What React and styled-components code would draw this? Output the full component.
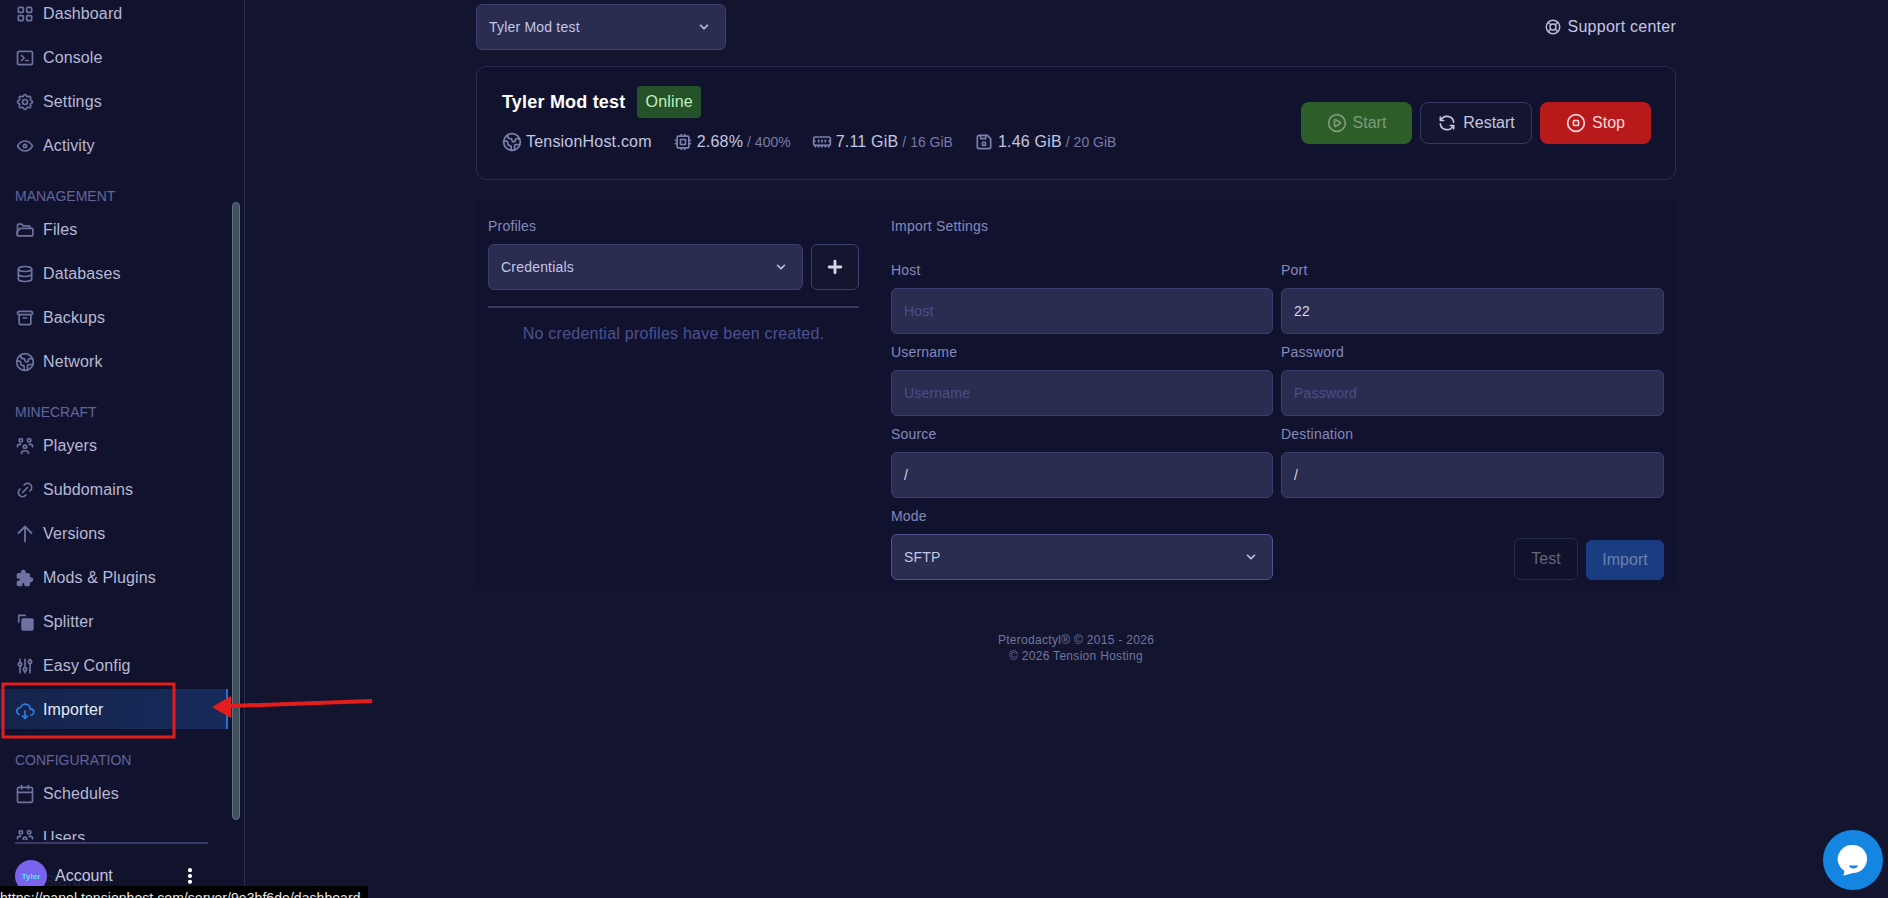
import React from 'react'
import styled, { createGlobalStyle } from 'styled-components'
import {
  TbLayoutGrid, TbTerminal2, TbSettings, TbEye, TbDatabase, TbArchive,
  TbUsersGroup, TbLink, TbPuzzleFilled, TbAdjustments, TbCloudDownload,
  TbRefresh, TbDotsVertical, TbLifebuoy, TbCpu, TbPlus, TbChevronDown,
  TbDeviceFloppy, TbFlag,
} from 'react-icons/tb'
import { Earth, MemoryStick, CirclePlay, CircleStop, Calendar } from 'lucide-react'

const Global = createGlobalStyle`
  html, body { margin: 0; padding: 0; height: 100%; }
  body {
    background: #13152f;
    font-family: "Liberation Sans", Arial, sans-serif;
    overflow: hidden;
  }
  * { box-sizing: border-box; }
`

const Page = styled.div`
  display: flex;
  height: 898px;
  overflow: hidden;
  position: relative;
`

const Sidebar = styled.aside`
  width: 245px;
  flex: none;
  background: #11132e;
  border-right: 1px solid #2a2c52;
  position: relative;
  overflow: hidden;
`

const Nav = styled.nav`
  margin-top: -7px;
  width: 228px;
  display: flex;
  flex-direction: column;
  gap: 4px;
`

const SectionLabel = styled.div`
  height: 40px;
  margin-bottom: -4px;
  padding: 0 0 5px 15px;
  display: flex;
  align-items: flex-end;
  font-size: 14px;
  line-height: 16px;
  color: #62659a;
  text-transform: uppercase;
`

const NavRow = styled.a`
  height: 40px;
  flex: none;
  display: flex;
  align-items: center;
  gap: 8px;
  padding: 1px 0 0 15px;
  font-size: 16px;
  letter-spacing: 0.12px;
  color: ${p => (p.$active ? '#e8eaf8' : '#b7b9d4')};
  background: ${p => (p.$active ? 'linear-gradient(90deg, #14244c, #172a5a)' : 'transparent')};
  border-right: 2px solid ${p => (p.$active ? '#2174dc' : 'transparent')};

  svg {
    width: 20px;
    height: 20px;
    flex: none;
    color: ${p => (p.$active ? '#2a7fe6' : '#6f719f')};
  }
`

const Thumb = styled.div`
  position: absolute;
  left: 232px;
  top: 202px;
  width: 8px;
  height: 618px;
  border-radius: 4px;
  background: #3f505f;
  border: 1px solid #64707f;
`

const SideFoot = styled.div`
  position: absolute;
  left: 0;
  right: 16px;
  top: 840px;
  bottom: 0;
  background: rgba(17, 19, 46, 0.92);
  padding: 2px 0 0 15px;
`

const FootLine = styled.div`
  width: 193px;
  height: 2px;
  background: #3a3a68;
`

const AccountRow = styled.div`
  width: 193px;
  margin-top: 16px;
  display: flex;
  align-items: center;
  gap: 8px;
  font-size: 16px;
  color: #c4c6de;

  svg { margin-left: auto; margin-right: 8px; color: #fff; }
`

const Avatar = styled.div`
  width: 32px;
  height: 32px;
  border-radius: 50%;
  background: #7a63ee;
  color: #63e0f2;
  font-size: 8px;
  font-weight: 700;
  display: flex;
  align-items: center;
  justify-content: center;
`

const Main = styled.main`
  flex: none;
  width: 1200px;
  margin-left: 231px;
  padding-top: 4px;
`

const TopBar = styled.div`
  display: flex;
  align-items: center;
  justify-content: space-between;
`

const SelectBox = styled.div`
  height: 46px;
  width: ${p => p.$w || 'auto'};
  flex: ${p => (p.$w ? 'none' : '1')};
  display: flex;
  align-items: center;
  justify-content: space-between;
  padding: 0 14px 0 12px;
  background: #2a2c50;
  border: 1px solid ${p => (p.$bright ? '#4f5296' : '#3c3e6d')};
  border-radius: 6px;
  font-size: 14px;
  letter-spacing: 0.2px;
  color: #c3c6e6;

  svg { width: 14px; height: 14px; stroke-width: 2.6; color: #c9cbe4; }
`

const SupportLink = styled.a`
  display: flex;
  align-items: center;
  gap: 6px;
  font-size: 16px;
  letter-spacing: 0.25px;
  color: #c3c6e6;

  svg { width: 18px; height: 18px; color: #b7b9d4; }
`

const ServerCard = styled.section`
  margin-top: 16px;
  height: 114px;
  border: 1px solid #2a2c52;
  border-radius: 10px;
  background: #11132e;
  display: flex;
  align-items: center;
  justify-content: space-between;
  padding: 0 24px 0 25px;
`

const ServerInfo = styled.div`
  display: flex;
  flex-direction: column;
  gap: 14px;
  padding-bottom: 8px;
`

const TitleRow = styled.div`
  display: flex;
  align-items: center;
  gap: 12px;
`

const ServerName = styled.h1`
  margin: 0;
  font-size: 18px;
  font-weight: 700;
  letter-spacing: 0.2px;
  color: #fff;
`

const Badge = styled.span`
  height: 32px;
  padding: 0 8px;
  display: flex;
  align-items: center;
  border-radius: 4px;
  background: #26522a;
  font-size: 16px;
  letter-spacing: 0.2px;
  color: #bff0bd;
`

const Stats = styled.div`
  display: flex;
  align-items: center;
  gap: 21px;
`

const Stat = styled.div`
  display: flex;
  align-items: center;
  gap: 4px;
  font-size: 16px;
  letter-spacing: 0.2px;
  color: #c3c6e0;

  svg { width: 20px; height: 20px; color: #7d7fab; }
`

const StatMax = styled.span`
  font-size: 14px;
  letter-spacing: 0;
  color: #777aa6;
`

const Actions = styled.div`
  display: flex;
  gap: 8px;
`

const ActionButton = styled.button`
  width: ${p => (p.$kind === 'restart' ? '112px' : '111px')};
  height: 42px;
  display: flex;
  align-items: center;
  justify-content: center;
  gap: 6px;
  padding: 0;
  border-radius: 8px;
  font: 16px "Liberation Sans", Arial, sans-serif;
  border: 1px solid ${p => (p.$kind === 'restart' ? '#35375f' : 'transparent')};
  background: ${p => ({ start: '#2d5e27', restart: '#14162f', stop: '#b81a1c' }[p.$kind])};
  color: ${p => ({ start: '#7d9a7c', restart: '#c3c6e0', stop: '#ffd9d9' }[p.$kind])};

  svg { width: 20px; height: 20px; }
`

const Columns = styled.div`
  margin-top: 20px;
  display: flex;
  gap: 8px;
`

const Panel = styled.section`
  background: #11132e;
  height: 390px;
  padding: 16px 12px;
  width: ${p => p.$w};
  flex: none;
`

const FieldTitle = styled.div`
  font-size: 14px;
  line-height: 20px;
  letter-spacing: 0.2px;
  color: #8589bd;
`

const ProfileRow = styled.div`
  margin-top: 8px;
  display: flex;
  gap: 8px;
`

const AddButton = styled.button`
  width: 48px;
  height: 46px;
  flex: none;
  display: flex;
  align-items: center;
  justify-content: center;
  padding: 0;
  border-radius: 6px;
  background: #14162f;
  border: 1px solid #3c3e6d;
  color: #d3d5ea;

  svg { width: 20px; height: 20px; stroke-width: 3.4; }
`

const Divider = styled.hr`
  margin: 16px 0 0;
  border: 0;
  height: 2px;
  background: #35375f;
`

const Empty = styled.p`
  margin: 16px 0 0;
  text-align: center;
  font-size: 16px;
  line-height: 20px;
  letter-spacing: 0.24px;
  color: #4d5190;
`

const FormGrid = styled.div`
  margin-top: 24px;
  display: grid;
  grid-template-columns: 382px 383px;
  column-gap: 8px;
  row-gap: 8px;
`

const Field = styled.label`
  display: flex;
  flex-direction: column;
  gap: 8px;
`

const Input = styled.input`
  height: 46px;
  width: 100%;
  padding: 0 12px;
  background: #2a2c50;
  border: 1px solid #3c3e6d;
  border-radius: 6px;
  font: 14px "Liberation Sans", Arial, sans-serif;
  letter-spacing: 0.2px;
  color: #d6d8ee;
  outline: none;

  &::placeholder { color: #4b4f8a; opacity: 1; }
`

const FormActions = styled.div`
  display: flex;
  justify-content: flex-end;
  align-items: flex-end;
  gap: 8px;
`

const SmallButton = styled.button`
  height: ${p => (p.$primary ? '40px' : '42px')};
  width: ${p => (p.$primary ? '78px' : '64px')};
  padding: 0;
  border-radius: 6px;
  font: 16px "Liberation Sans", Arial, sans-serif;
  background: ${p => (p.$primary ? '#1a3c80' : '#10122c')};
  border: 1px solid ${p => (p.$primary ? '#1a3c80' : '#262849')};
  color: ${p => (p.$primary ? '#6b82ad' : '#62657f')};
`

const Copyright = styled.footer`
  margin-top: 42px;
  text-align: center;
  font-size: 12px;
  line-height: 16px;
  letter-spacing: 0.3px;
  color: #70749f;
`

const ChatBubble = styled.div`
  position: absolute;
  left: 1823px;
  top: 830px;
  width: 60px;
  height: 60px;
  border-radius: 50%;
  background: #1585e2;
  display: flex;
  align-items: center;
  justify-content: center;
`

const StatusTip = styled.div`
  position: absolute;
  left: 0;
  top: 886px;
  width: 368px;
  height: 20px;
  padding: 4px 0 0 0;
  background: #000;
  color: #e6e6e6;
  font-size: 14px;
  letter-spacing: 0.06px;
  line-height: 16px;
  white-space: nowrap;
  overflow: hidden;
`

const Annotation = styled.svg`
  position: absolute;
  left: 0;
  top: 0;
  width: 400px;
  height: 898px;
  pointer-events: none;
`

const FilesIcon = () => (
  <svg viewBox="0 0 24 24" fill="none" stroke="currentColor" strokeWidth="2" strokeLinecap="round" strokeLinejoin="round">
    <path d="M3 17V6a1 1 0 0 1 1-1h4l2 2h7a1 1 0 0 1 1 1v1" />
    <path d="M7 10h14a1 1 0 0 1 1 1v7a1 1 0 0 1-1 1H4a1 1 0 0 1-1-1v-4l3-3a2 2 0 0 1 1-1z" transform="translate(-.5)" />
  </svg>
)

const SplitterIcon = () => (
  <svg viewBox="0 0 24 24" fill="currentColor">
    <rect x="7.500" y="7.500" width="15" height="15" rx="2" />
    <path d="M5 3h8v2H5.500v8h-2V4.500A1.500 1.500 0 0 1 5 3z" />
  </svg>
)

const VersionsIcon = () => (
  <svg viewBox="0 0 20 20" fill="none" stroke="currentColor" strokeWidth="1.800" strokeLinecap="round" strokeLinejoin="round">
    <path d="M10 2.500v15M3.500 9l6.500-6.500L16.500 9" />
  </svg>
)

const groups = [
  { items: [['Dashboard', TbLayoutGrid], ['Console', TbTerminal2], ['Settings', TbSettings], ['Activity', TbEye]] },
  { label: 'Management', items: [['Files', FilesIcon], ['Databases', TbDatabase], ['Backups', TbArchive], ['Network', Earth]] },
  {
    label: 'Minecraft',
    items: [['Players', TbUsersGroup], ['Subdomains', TbLink], ['Versions', VersionsIcon], ['Mods & Plugins', TbPuzzleFilled],
      ['Splitter', SplitterIcon], ['Easy Config', TbAdjustments], ['Importer', TbCloudDownload, true]],
  },
  { label: 'Configuration', items: [['Schedules', Calendar], ['Users', TbUsersGroup], ['Startup', TbFlag]] },
]

const fields = [
  ['Host', 'Host', ''],
  ['Port', '', '22'],
  ['Username', 'Username', ''],
  ['Password', 'Password', ''],
  ['Source', '', '/'],
  ['Destination', '', '/'],
]

export default function App() {
  return (
    <Page>
      <Global />
      <Sidebar>
        <Nav>
          {groups.map(g => (
            <React.Fragment key={g.label || 'top'}>
              {g.label && <SectionLabel>{g.label}</SectionLabel>}
              {g.items.map(([name, Icon, active]) => (
                <NavRow key={name} $active={active}>
                  <Icon />
                  {name}
                </NavRow>
              ))}
            </React.Fragment>
          ))}
        </Nav>
        <Thumb />
        <SideFoot>
          <FootLine />
          <AccountRow>
            <Avatar>Tyler</Avatar>
            Account
            <TbDotsVertical size={20} strokeWidth={3} />
          </AccountRow>
        </SideFoot>
      </Sidebar>

      <Main>
        <TopBar>
          <SelectBox $w="250px">
            Tyler Mod test
            <TbChevronDown />
          </SelectBox>
          <SupportLink>
            <TbLifebuoy />
            Support center
          </SupportLink>
        </TopBar>

        <ServerCard>
          <ServerInfo>
            <TitleRow>
              <ServerName>Tyler Mod test</ServerName>
              <Badge>Online</Badge>
            </TitleRow>
            <Stats>
              <Stat><Earth />TensionHost.com</Stat>
              <Stat><TbCpu />2.68% <StatMax>/ 400%</StatMax></Stat>
              <Stat><MemoryStick />7.11 GiB <StatMax>/ 16 GiB</StatMax></Stat>
              <Stat><TbDeviceFloppy />1.46 GiB <StatMax>/ 20 GiB</StatMax></Stat>
            </Stats>
          </ServerInfo>
          <Actions>
            <ActionButton $kind="start"><CirclePlay />Start</ActionButton>
            <ActionButton $kind="restart"><TbRefresh />Restart</ActionButton>
            <ActionButton $kind="stop"><CircleStop />Stop</ActionButton>
          </Actions>
        </ServerCard>

        <Columns>
          <Panel $w="395px">
            <FieldTitle>Profiles</FieldTitle>
            <ProfileRow>
              <SelectBox>
                Credentials
                <TbChevronDown />
              </SelectBox>
              <AddButton><TbPlus /></AddButton>
            </ProfileRow>
            <Divider />
            <Empty>No credential profiles have been created.</Empty>
          </Panel>

          <Panel $w="797px">
            <FieldTitle>Import Settings</FieldTitle>
            <FormGrid>
              {fields.map(([label, placeholder, value]) => (
                <Field key={label}>
                  <FieldTitle>{label}</FieldTitle>
                  <Input placeholder={placeholder} defaultValue={value} readOnly />
                </Field>
              ))}
              <Field>
                <FieldTitle>Mode</FieldTitle>
                <SelectBox $bright $w="100%">
                  SFTP
                  <TbChevronDown />
                </SelectBox>
              </Field>
              <FormActions>
                <SmallButton>Test</SmallButton>
                <SmallButton $primary>Import</SmallButton>
              </FormActions>
            </FormGrid>
          </Panel>
        </Columns>

        <Copyright>
          Pterodactyl® © 2015 - 2026
          <br />
          © 2026 Tension Hosting
        </Copyright>
      </Main>

      <Annotation viewBox="0 0 400 898">
        <rect x="3" y="684" width="171" height="53" fill="none" stroke="#e31c1c" strokeWidth="3" />
        <path d="M231 706 L372 701" stroke="#e31c1c" strokeWidth="4" fill="none" />
        <path d="M212 707 L231 696 L231 718 Z" fill="#e31c1c" />
      </Annotation>

      <ChatBubble>
        <svg width="32" height="34" viewBox="0 0 32 34">
          <path d="M16 2a14 14 0 0 1 0 28c-3 .2-6 2-10 2.600 1-1.600 1.400-3 1.200-4.800A14 14 0 0 1 16 2z" fill="#fff" />
          <path d="M12 22.500h9c-.6 2-2 3-4.500 3s-3.900-1-4.500-3z" fill="#1585e2" />
        </svg>
      </ChatBubble>

      <StatusTip>https://panel.tensionhost.com/server/9e3bf6de/dashboard</StatusTip>
    </Page>
  )
}
